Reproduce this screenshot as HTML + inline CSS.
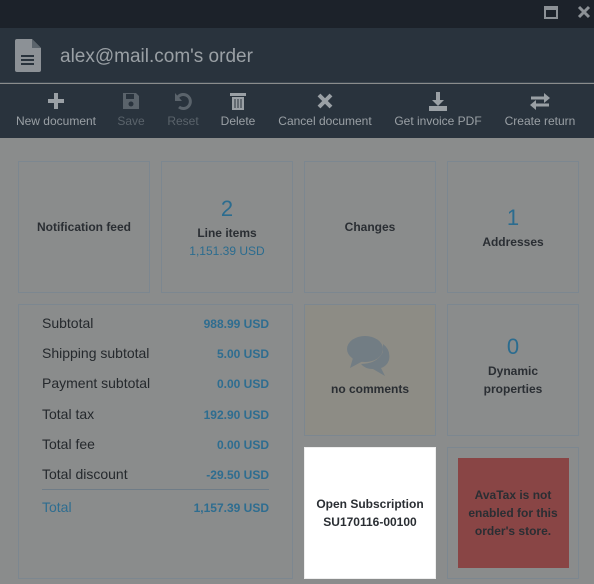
<!DOCTYPE html>
<html><head><style>
*{margin:0;padding:0;box-sizing:border-box}
body{width:594px;height:584px;overflow:hidden;background:#8a8c8c;font-family:"Liberation Sans",sans-serif;position:relative}
.tb{position:absolute;left:0;top:0;width:594px;height:28px;background:#1c222a}
.hd{position:absolute;left:0;top:28px;width:594px;height:55px;background:#29333d;border-bottom:1px solid #3b4650}
.hd .t{position:absolute;left:60px;top:18px;font-size:19px;color:#9aa0a5}
.tl{position:absolute;left:0;top:84px;width:594px;height:54px;background:#29333d}
.btn{position:absolute;top:0;height:54px;text-align:center;font-size:12px;color:#9aa0a5}
.btn .l{position:absolute;top:30px;left:0;right:0;white-space:nowrap}
.btn svg{position:absolute;top:7px;left:50%;margin-left:-10px}
.dis{color:#5a636b}
.c{position:absolute;border:1px solid #7c8790;background:#8a8c8c;display:flex;flex-direction:column;align-items:center;justify-content:center;text-align:center;font-size:12px;font-weight:bold;color:#2a2e33;line-height:18px}
.n{font-size:22px;color:#2b6c8f;font-weight:normal;line-height:30px}
.b{color:#2b6c8f;font-weight:normal}
.row{position:absolute;left:23px;width:227px;font-size:14px;color:#25292d;text-align:left;font-weight:normal}
.row span{position:absolute;right:0;top:1px;font-size:12px;font-weight:bold;color:#2e6d90}
</style></head><body>
<div class="tb">
<svg style="position:absolute;left:544px;top:6px" width="14" height="13"><rect x="1" y="1" width="12" height="11" fill="none" stroke="#8c9196" stroke-width="2"/><rect x="1" y="1" width="12" height="3" fill="#8c9196"/></svg>
<svg style="position:absolute;left:577px;top:5px" width="14" height="14"><path d="M2 2L12 12M12 2L2 12" stroke="#8c9196" stroke-width="3"/></svg>
</div>
<div class="hd">
<svg style="position:absolute;left:15px;top:11px" width="26" height="33"><path d="M0 2Q0 0 2 0H17L26 9V31Q26 33 24 33H2Q0 33 0 31Z" fill="#8c9196"/><path d="M17 0V9H26" fill="#5b646c"/><path d="M6 17H19M6 21H19M6 25H19" stroke="#29333d" stroke-width="2"/></svg>
<div class="t">alex@mail.com's order</div>
</div>
<div class="tl">
<div class="btn" style="left:10px;width:92px"><svg width="20" height="20"><path d="M10 2V18M2 10H18" stroke="#9aa0a5" stroke-width="4"/></svg><div class="l">New document</div></div>
<div class="btn dis" style="left:112px;width:38px"><svg width="20" height="20"><path d="M2 2H15L18 5V18H2Z" fill="#5a636b"/><rect x="5" y="3" width="8" height="5" fill="#29333d"/><circle cx="10" cy="13" r="2.5" fill="#29333d"/></svg><div class="l">Save</div></div>
<div class="btn dis" style="left:162px;width:42px"><svg width="20" height="20"><path d="M5 6A7 7 0 1 1 6 16" fill="none" stroke="#5a636b" stroke-width="3"/><path d="M2 2V10H9Z" fill="#5a636b"/></svg><div class="l">Reset</div></div>
<div class="btn" style="left:216px;width:44px"><svg width="20" height="20"><rect x="2" y="2" width="16" height="3" fill="#9aa0a5"/><rect x="4" y="6" width="12" height="13" fill="#9aa0a5"/><path d="M7 8V17M10 8V17M13 8V17" stroke="#29333d" stroke-width="1"/></svg><div class="l">Delete</div></div>
<div class="btn" style="left:274px;width:102px"><svg width="20" height="20"><path d="M4 4L16 16M16 4L4 16" stroke="#9aa0a5" stroke-width="4"/></svg><div class="l">Cancel document</div></div>
<div class="btn" style="left:390px;width:96px"><svg width="20" height="20"><path d="M10 1V11" stroke="#9aa0a5" stroke-width="4"/><path d="M4 9L10 15L16 9Z" fill="#9aa0a5"/><rect x="1" y="15" width="18" height="5" fill="#9aa0a5"/></svg><div class="l">Get invoice PDF</div></div>
<div class="btn" style="left:500px;width:80px"><svg width="20" height="20"><path d="M1 7H15M5 14H19" stroke="#9aa0a5" stroke-width="3"/><path d="M14 2L20 7L14 12ZM6 9L0 14L6 19Z" fill="#9aa0a5"/></svg><div class="l">Create return</div></div>
</div>

<div class="c" style="left:18px;top:161px;width:132px;height:132px">Notification feed</div>
<div class="c" style="left:161px;top:161px;width:132px;height:132px"><div class="n">2</div>Line items<div class="b">1,151.39 USD</div></div>
<div class="c" style="left:304px;top:161px;width:132px;height:132px">Changes</div>
<div class="c" style="left:447px;top:161px;width:132px;height:132px"><div class="n">1</div>Addresses</div>

<div class="c" style="left:18px;top:304px;width:275px;height:275px;display:block">
<div class="row" style="top:9px">Subtotal<span>988.99 USD</span></div>
<div class="row" style="top:39px">Shipping subtotal<span>5.00 USD</span></div>
<div class="row" style="top:69px">Payment subtotal<span>0.00 USD</span></div>
<div class="row" style="top:100px">Total tax<span>192.90 USD</span></div>
<div class="row" style="top:130px">Total fee<span>0.00 USD</span></div>
<div class="row" style="top:160px">Total discount<span>-29.50 USD</span></div>
<div style="position:absolute;left:23px;top:184px;width:227px;height:1px;background:#6f7c87"></div>
<div class="row" style="top:193px;color:#2e6d90">Total<span>1,157.39 USD</span></div>
</div>

<div class="c" style="left:304px;top:304px;width:132px;height:132px;background:#8d8c85">
<svg width="50" height="44" style="margin-top:-8px"><ellipse cx="20" cy="15" rx="18" ry="13" fill="#727d84"/><path d="M8 24L5 34L18 27Z" fill="#727d84"/><path d="M38 10Q46 16 44 26Q42 32 36 34L40 42L28 35Q20 35 16 30Q32 30 38 18Z" fill="#727d84"/></svg>
<div style="margin-top:2px">no comments</div></div>
<div class="c" style="left:447px;top:304px;width:132px;height:132px"><div class="n" style="margin-top:-10px">0</div>Dynamic<br>properties</div>

<div class="c" style="left:304px;top:447px;width:132px;height:132px;background:#fff;border-color:#eee">Open Subscription<br>SU170116-00100</div>
<div class="c" style="left:447px;top:447px;width:132px;height:132px"><div style="width:111px;height:110px;background:#894545;display:flex;align-items:center;justify-content:center;line-height:18px;padding:0 6px">AvaTax is not enabled for this order's store.</div></div>
</body></html>
